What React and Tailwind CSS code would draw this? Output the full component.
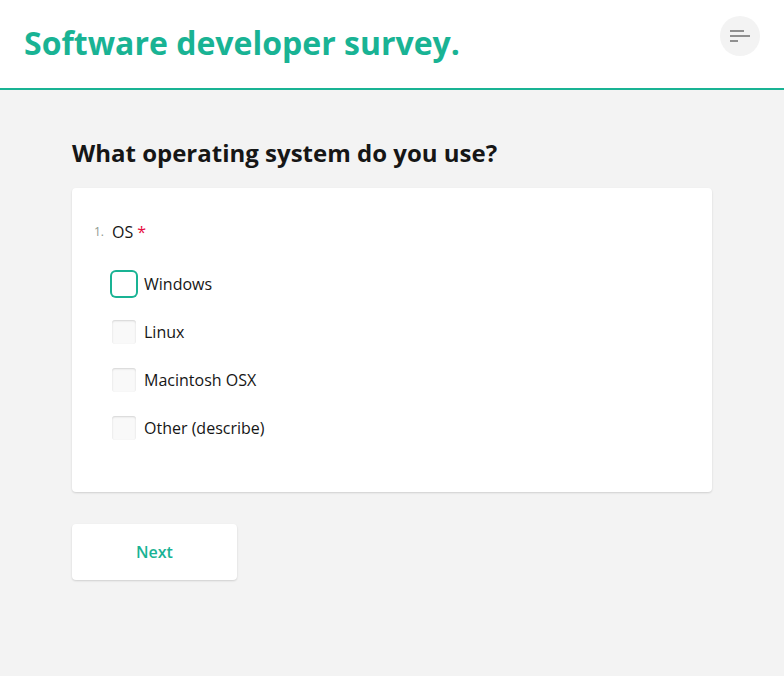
const options = ["Windows", "Linux", "Macintosh OSX", "Other (describe)"];

export default function App() {
    return (
        <div className="min-h-[676px] bg-[#f3f3f3] font-['Open_Sans',sans-serif] text-[#161616]">
            <header className="bg-white border-b-2 border-[#19b394] h-[90px] flex items-start justify-between pl-[24px] pr-[24px]">
                <h1 className="mt-[23px] text-[32px] leading-[40px] font-bold text-[#19b394]">
                    Software developer survey.
                </h1>
                <button className="mt-[16px] w-[40px] h-[40px] rounded-full bg-[#f3f3f3] flex flex-col items-start justify-center gap-[3px] pl-[10px]">
                    <span className="block w-[14px] h-[2px] bg-[#909090]" />
                    <span className="block w-[20px] h-[2px] bg-[#909090]" />
                    <span className="block w-[8px] h-[2px] bg-[#909090]" />
                </button>
            </header>

            <main className="px-[72px] pt-[47px]">
                <h2 className="text-[24px] leading-[32px] font-bold text-[#161616]">
                    What operating system do you use?
                </h2>

                <div className="mt-[19px] bg-white rounded-[4px] shadow-[0_1px_2px_rgba(0,0,0,0.15)] pl-[22px] pt-[32px] pb-[40px]">
                    <div className="flex items-center h-[24px]">
                        <span className="text-[12px] text-[#8f9a90] w-[18px]">1.</span>
                        <span className="text-[16px]">OS</span>
                        <span className="text-[16px] text-[#e60a3e] ml-[4px]">*</span>
                    </div>

                    <div className="mt-[16px] pl-[18px]">
                        {options.map((opt, i) => (
                            <label key={opt} className="flex items-center h-[48px]">
                                {i === 0 ? (
                                    <span className="block w-[24px] h-[24px] rounded-[4px] bg-white ring-2 ring-[#19b394]" />
                                ) : (
                                    <span className="block w-[24px] h-[24px] rounded-[3px] bg-[#f9f9f9] shadow-[inset_0_1px_2px_rgba(0,0,0,0.15)]" />
                                )}
                                <span className="ml-[8px] text-[16px] leading-[24px]">{opt}</span>
                            </label>
                        ))}
                    </div>
                </div>

                <button className="mt-[32px] w-[165px] h-[56px] bg-white rounded-[4px] shadow-[0_1px_2px_rgba(0,0,0,0.15)] text-[16px] font-semibold text-[#19b394]">
                    Next
                </button>
            </main>
        </div>
    );
}
